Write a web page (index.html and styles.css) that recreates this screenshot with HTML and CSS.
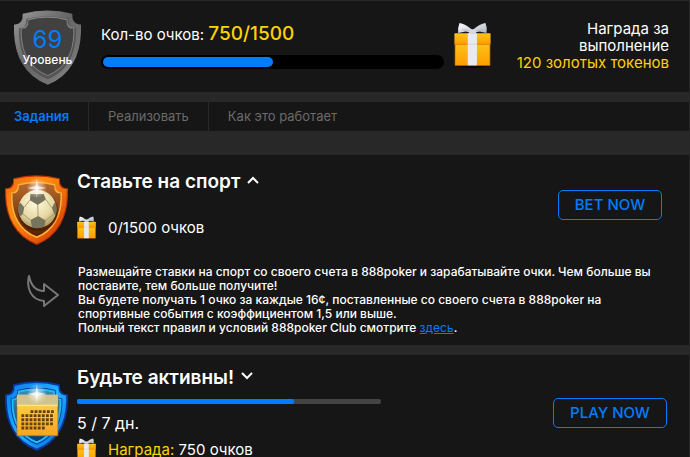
FILE: index.html
```html
<!DOCTYPE html>
<html lang="ru">

<head>
    <meta charset="UTF-8">
    <meta name="viewport" content="width=device-width, initial-scale=1.0">
    <title>888poker Club</title>
    <link rel="stylesheet" href="styles.css">
</head>

<body>

    <!-- Shared icon shapes -->
    <svg class="shapes" aria-hidden="true">
        <defs>
            <path id="shield" d="M26 10Q100 -9 174 10L175 26Q182 44 200 42L200 66Q198 120 176 158Q150 203 101 222Q50 203 24 158Q2 120 0 66L0 42Q18 44 25 26Z" />
            <linearGradient id="greyRim" x1="0" y1="0" x2="1" y2="1">
                <stop offset="0" stop-color="#999" />
                <stop offset=".45" stop-color="#656565" />
                <stop offset=".75" stop-color="#747474" />
                <stop offset="1" stop-color="#aaa" />
            </linearGradient>
            <linearGradient id="orangeRim" x1="0" y1="0" x2="1" y2="1">
                <stop offset="0" stop-color="#f26a10" />
                <stop offset=".35" stop-color="#ff8c12" />
                <stop offset=".6" stop-color="#f36a0c" />
                <stop offset="1" stop-color="#c52d05" />
            </linearGradient>
            <linearGradient id="orangeIn" x1="0" y1="0" x2="0" y2="1">
                <stop offset="0" stop-color="#b7692c" />
                <stop offset="1" stop-color="#552000" />
            </linearGradient>
            <linearGradient id="blueRim" x1="0" y1="0" x2="1" y2="1">
                <stop offset="0" stop-color="#087ae8" />
                <stop offset=".5" stop-color="#20b2ff" />
                <stop offset="1" stop-color="#0560d8" />
            </linearGradient>
            <linearGradient id="blueIn" x1="0" y1="0" x2="0" y2="1">
                <stop offset="0" stop-color="#3a8caf" />
                <stop offset="1" stop-color="#003d79" />
            </linearGradient>
            <linearGradient id="box" x1="0" y1="0" x2="0" y2="1">
                <stop offset="0" stop-color="#ffc41c" />
                <stop offset="1" stop-color="#ff9e00" />
            </linearGradient>
            <linearGradient id="bow" x1="0" y1="0" x2="1" y2="1">
                <stop offset="0" stop-color="#fff" />
                <stop offset="1" stop-color="#aeb6c0" />
            </linearGradient>
            <linearGradient id="page" x1="0" y1="0" x2="0" y2="1">
                <stop offset="0" stop-color="#ffd851" />
                <stop offset="1" stop-color="#f5a51d" />
            </linearGradient>
            <radialGradient id="ballFill" cx=".45" cy=".3" r=".75">
                <stop offset="0" stop-color="#fffbe0" />
                <stop offset=".6" stop-color="#e7d9a5" />
                <stop offset="1" stop-color="#a08a54" />
            </radialGradient>
            <radialGradient id="glow">
                <stop offset="0" stop-color="#fff" />
                <stop offset=".25" stop-color="#fff" stop-opacity=".6" />
                <stop offset="1" stop-color="#fff" stop-opacity="0" />
            </radialGradient>
            <clipPath id="ballClip">
                <circle cx="103" cy="108" r="61" />
            </clipPath>
            <symbol id="flare" viewBox="0 0 80 80">
                <circle cx="40" cy="40" r="34" fill="url(#glow)" />
                <path d="M40 8L44 34L72 40L44 45L40 72L36 45L8 40L36 34Z" fill="#fff" opacity=".7" />
            </symbol>
            <symbol id="gift" viewBox="0 0 108 132">
                <ellipse cx="54" cy="124" rx="53" ry="7" fill="#080808" />
                <rect x="3" y="56" width="102" height="68" fill="url(#box)" stroke="#e38500" stroke-width="2" />
                <rect x="1" y="30" width="106" height="32" rx="3" fill="url(#box)" />
                <path d="M1 62H107" stroke="#e97a00" stroke-width="3" />
                <rect x="40" y="30" width="27" height="94" fill="#e7eaf0" />
                <path d="M40 62H67" stroke="#c9ced6" stroke-width="2" />
                <path d="M53 20Q32 2 16 0Q10 14 12 29L34 25L53 29ZM55 20Q76 2 92 0Q98 14 95 29L75 25L55 29Z" fill="url(#bow)" />
                <path d="M24 20L45 23M84 20L63 23" stroke="#b4bbc5" stroke-width="3" />
                <rect x="43" y="18" width="22" height="13" rx="5" fill="#d6dae0" />
            </symbol>
        </defs>
    </svg>

    <!-- Level and points -->
    <header class="summary">
        <div class="level">
            <svg class="level-shield" viewBox="0 0 200 222" aria-hidden="true">
                <use href="#shield" fill="url(#greyRim)" />
                <use href="#shield" fill="#555" transform="translate(15 17) scale(.85)" />
                <use href="#shield" fill="#858585" transform="translate(20 18) scale(.8)" />
                <use href="#shield" fill="#414141" transform="translate(23 22) scale(.77)" />
            </svg>
            <div class="level-text">
                <span class="level-number">69</span>
                <span class="level-label">Уровень</span>
            </div>
        </div>
        <div class="points">
            <div class="points-text">Кол-во очков: <strong>750/1500</strong></div>
            <div class="points-bar">
                <div class="points-fill" style="width: 50%"></div>
            </div>
        </div>
        <svg class="gift-large" aria-hidden="true"><use href="#gift" /></svg>
        <div class="reward">Награда за выполнение <span class="gold">120 золотых токенов</span></div>
    </header>

    <nav class="tabs">
        <a class="tab active" href="#tasks">Задания</a>
        <a class="tab" href="#redeem">Реализовать</a>
        <a class="tab" href="#how">Как это работает</a>
    </nav>

    <main id="tasks">
        <section class="task">
            <svg class="task-shield" viewBox="0 0 200 222" aria-hidden="true">
                <use href="#shield" fill="#bd3104" />
                <use href="#shield" fill="url(#orangeRim)" transform="translate(4 4) scale(.96)" />
                <use href="#shield" fill="#ffb136" transform="translate(19 21) scale(.81)" />
                <use href="#shield" fill="url(#orangeIn)" transform="translate(24 26) scale(.76)" />
                <circle cx="104" cy="114" r="64" fill="#421900" opacity=".6" />
                <g clip-path="url(#ballClip)">
                    <circle cx="103" cy="108" r="61" fill="url(#ballFill)" />
                    <g transform="translate(3 -6)">
                        <path d="M78 66L120 66L127 84L101 101L76 86ZM46 94L58 108L54 130L42 140L34 108ZM155 93L146 110L153 130L168 138L170 100ZM78 149L102 136L126 150L121 178L84 178Z" fill="#77745e" />
                        <path d="M76 86L58 108M127 84L146 110M101 101L102 136M54 130L78 149M153 130L126 150" stroke="#a69a70" stroke-width="3" />
                    </g>
                </g>
                <use href="#flare" x="63" y="3" width="76" height="76" />
            </svg>
            <div class="task-body">
                <h2>Ставьте на спорт
                    <svg class="chevron" viewBox="0 0 12 8" aria-hidden="true"><path d="M1 7L6 2L11 7" /></svg>
                </h2>
                <div class="task-points">
                    <svg class="gift-small" aria-hidden="true"><use href="#gift" /></svg>
                    <span>0/1500 очков</span>
                </div>
            </div>
            <div class="task-action">
                <button type="button">BET NOW</button>
            </div>
            <svg class="arrow" viewBox="0 0 34 34" aria-hidden="true">
                <path d="M3 2C0 14 5 26 18 27V32L32 21L18 10V17C10 17 5 12 3 2Z" />
            </svg>
            <p class="description">
                Размещайте ставки на спорт со своего счета в 888poker и зарабатывайте очки. Чем больше вы поставите, тем больше получите!<br>
                Вы будете получать 1 очко за каждые 16¢, поставленные со своего счета в 888poker на спортивные события с коэффициентом 1,5 или выше.<br>
                Полный текст правил и условий 888poker Club смотрите <a href="#terms">здесь</a>.
            </p>
        </section>

        <section class="task">
            <svg class="task-shield" viewBox="0 0 200 222" aria-hidden="true">
                <use href="#shield" fill="#0737a1" />
                <use href="#shield" fill="url(#blueRim)" transform="translate(6 6) scale(.94)" />
                <use href="#shield" fill="#073a9a" transform="translate(18 20) scale(.82)" />
                <use href="#shield" fill="#22baff" transform="translate(21 23) scale(.79)" />
                <use href="#shield" fill="url(#blueIn)" transform="translate(27 29) scale(.73)" />
                <rect x="38" y="46" width="130" height="128" fill="url(#page)" stroke="#a56815" stroke-width="2" />
                <rect x="38" y="43" width="130" height="32" fill="#cfc391" />
                <path d="M38 77H168" stroke="#fff0a0" stroke-width="3" />
                <g stroke="#5e4213" stroke-width="9" stroke-dasharray="9 4">
                    <path d="M81 97H155M52 110H155M52 123H155M52 136H155M52 149H129" />
                </g>
                <use href="#flare" x="63" y="3" width="76" height="76" />
            </svg>
            <div class="task-body">
                <h2>Будьте активны!
                    <svg class="chevron" viewBox="0 0 12 8" aria-hidden="true"><path d="M1 1L6 6L11 1" /></svg>
                </h2>
                <div class="days-bar">
                    <div class="days-fill" style="width: 71.4%"></div>
                </div>
                <div class="days-text">5 / 7 дн.</div>
                <div class="task-points">
                    <svg class="gift-small" aria-hidden="true"><use href="#gift" /></svg>
                    <span><span class="gold">Награда:</span> 750 очков</span>
                </div>
            </div>
            <div class="task-action">
                <button type="button">PLAY NOW</button>
            </div>
        </section>
    </main>

</body>

</html>
```
FILE: styles.css
```css
* {
    box-sizing: border-box;
}

body {
    margin: 0;
    padding-top: 1px;
    height: 100vh;
    overflow: hidden;
    background-color: #282828;
    border-right: 1px solid #282828;
    color: #fff;
    font-family: Inter, "Noto Sans", sans-serif;
}

.shapes {
    position: absolute;
    width: 0;
    height: 0;
}

.gold {
    color: #ffd200;
}

/* Top summary */
.summary {
    display: flex;
    align-items: flex-start;
    height: 91px;
    padding: 9px 20px 0 14px;
    background-color: #161616;
}

.level {
    display: grid;
    justify-items: center;
    width: 67px;
    margin-right: 20px;
}

.level-shield,
.level-text {
    grid-area: 1 / 1;
}

.level-shield {
    width: 67px;
    height: 75px;
}

.level-text {
    display: flex;
    flex-direction: column;
    align-items: center;
    padding-top: 18px;
}

.level-number {
    font-size: 24px;
    line-height: 24px;
    color: #007dff;
}

.level-label {
    font-size: 12px;
    line-height: 16px;
    font-weight: 500;
}

.points {
    flex: 1;
    padding-top: 12px;
}

.points-text {
    font-size: 15px;
    line-height: 24px;
}

.points-text strong {
    font-size: 19px;
    font-weight: 500;
    color: #ffd200;
}

.points-bar {
    height: 14px;
    margin-top: 8px;
    padding: 2px;
    border-radius: 7px;
    background-color: #000;
}

.points-fill {
    height: 10px;
    border-radius: 5px;
    background-color: #007dff;
}

.gift-large {
    width: 37px;
    height: 45px;
    margin: 13px 24px 0 10px;
}

.reward {
    width: 154px;
    padding-top: 10px;
    font-size: 15px;
    line-height: 17px;
    text-align: right;
}

.reward .gold {
    white-space: nowrap;
}

/* Tabs */
.tabs {
    display: flex;
    margin: 10px 0 24px;
    background-color: #161616;
}

.tab {
    padding: 0 19px;
    border-right: 1px solid #282828;
    font-size: 13px;
    line-height: 29px;
    color: #6b6b6b;
    text-decoration: none;
}

.tab:last-child {
    border-right: none;
}

.tab.active {
    padding-left: 14px;
    color: #007dff;
    font-weight: 600;
}

/* Tasks */
.task {
    display: grid;
    grid-template-columns: 77px 1fr 158px;
    margin-bottom: 10px;
    padding: 13px 0 10px;
    background-color: #161616;
}

.task-shield {
    width: 63px;
    height: 70px;
    margin: 7px 0 0 5px;
}

h2 {
    margin: 0;
    font-size: 19px;
    line-height: 28px;
    font-weight: 600;
}

.chevron {
    width: 12px;
    height: 8px;
    margin-left: 2px;
    vertical-align: 4px;
    fill: none;
    stroke: #fff;
    stroke-width: 2;
}

.task-points {
    display: flex;
    align-items: center;
    gap: 12px;
    margin-top: 20px;
    font-size: 15px;
    line-height: 24px;
}

.gift-small {
    width: 19px;
    height: 24px;
}

.task-action {
    padding-top: 22px;
    text-align: center;
}

button {
    height: 30px;
    padding: 0 16px;
    border: 1px solid #007dff;
    border-radius: 5px;
    background: none;
    color: #007dff;
    font: 500 15px/28px Inter, sans-serif;
    cursor: pointer;
}

.arrow {
    width: 34px;
    height: 34px;
    margin: 29px 0 0 26px;
    fill: none;
    stroke: #777;
    stroke-width: 2;
    stroke-linejoin: round;
}

.description {
    grid-column: 2 / 4;
    margin: 20px 20px 0 1px;
    font-size: 12px;
    line-height: 14px;
    font-weight: 500;
}

.description a {
    color: #007dff;
    font-weight: 400;
}

/* Second task with daily progress */
.task + .task {
    padding-top: 9px;
}

.task + .task .task-shield {
    margin-top: 17px;
}

.task + .task .task-action {
    padding-top: 34px;
}

.days-bar {
    width: 67%;
    height: 5px;
    margin-top: 7px;
    border-radius: 2px;
    background-color: #444;
}

.days-fill {
    height: 5px;
    border-radius: 2px;
    background-color: #007dff;
}

.days-text {
    margin-top: 8px;
    font-size: 16px;
    line-height: 22px;
}

.days-text + .task-points {
    margin-top: 4px;
}
```
